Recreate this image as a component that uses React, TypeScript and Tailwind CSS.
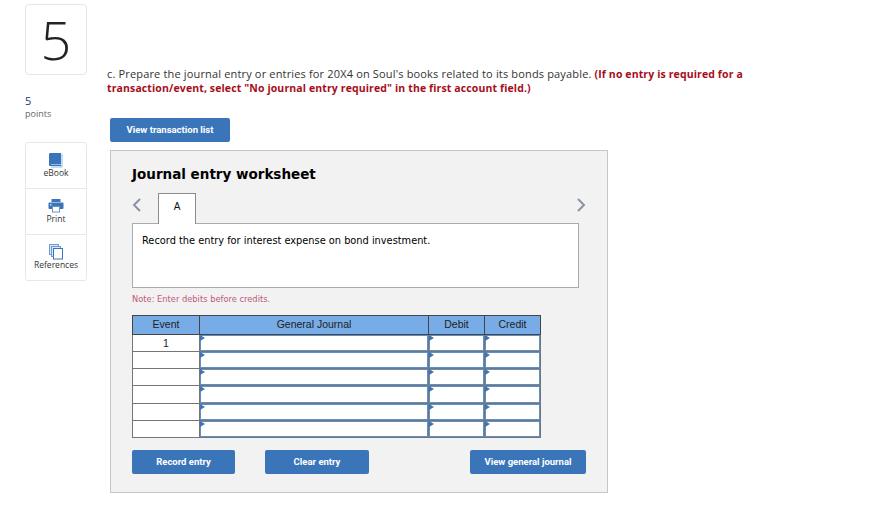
const rows = ["1", "", "", "", "", ""];

function BookIcon() {
  return (
    <svg width="16" height="16" viewBox="0 0 16 16">
      <path d="M14 2v13H3" fill="none" stroke="#8db8ea" strokeWidth="1" />
      <path d="M1 2.5C1 1.5 1.6 1 2.5 1H13v11.5H3v.5h10v1H2.5C1.6 14 1 13.5 1 12.5z" fill="#3a75b9" />
    </svg>
  );
}

function PrintIcon() {
  return (
    <svg width="16" height="16" viewBox="0 0 16 16">
      <rect x="3.5" y="1" width="9" height="3" fill="#3a75b9" />
      <rect x="0.5" y="4.5" width="15" height="6.5" rx="1" fill="#3a75b9" />
      <rect x="2" y="6" width="1.5" height="1.5" fill="#cfe0f5" />
      <rect x="4.5" y="8.5" width="7" height="5.5" fill="#fff" stroke="#6e94c4" strokeWidth="1" />
    </svg>
  );
}

function RefIcon() {
  return (
    <svg width="15" height="16" viewBox="0 0 15 16">
      <rect x="0.5" y="0.5" width="9" height="10" fill="#d6e6f8" stroke="#6f9bd0" />
      <rect x="2.5" y="2.5" width="9" height="10" fill="#d6e6f8" stroke="#6f9bd0" />
      <rect x="4.5" y="4.5" width="9" height="10.5" fill="#fff" stroke="#3a75b9" />
    </svg>
  );
}

function NavItem({ icon, label, last }: { icon: React.ReactNode; label: string; last?: boolean }) {
  return (
    <div className={`flex flex-col items-center pt-[9px] ${last ? "h-[45px]" : "h-[46px] border-b border-[#e8e8e8]"}`}>
      <div className="flex h-4 items-center justify-center">{icon}</div>
      <span className="text-[8.5px] leading-[10px] text-[#333]">{label}</span>
    </div>
  );
}

function BlueButton({ label, className }: { label: string; className: string }) {
  return (
    <button className={`h-6 rounded-[2px] bg-[#3a75b9] text-[9.5px] font-bold text-white font-['Roboto',sans-serif] ${className}`}>
      {label}
    </button>
  );
}

function Cell() {
  return (
    <td className="relative border border-[#757575] p-0">
      <div className="absolute inset-0 border-[1.5px] border-[#5f8fc9] bg-white" />
      <div className="absolute left-0 top-0 h-0 w-0 border-y-[3px] border-l-[5px] border-y-transparent border-l-[#3a75b9]" />
    </td>
  );
}

export default function App() {
  return (
    <div className="flex h-[511px] w-[880px] overflow-hidden bg-white font-['Open_Sans',sans-serif]">
      <div className="ml-[25px] w-[62px] pt-1">
        <div className="flex h-[71px] items-center justify-center rounded-[4px] border border-[#e6e6e6] text-[54px] font-light text-[#222]">
          5
        </div>
        <div className="mt-[19px] text-[11px] leading-[13px] text-[#1f3a73]">5</div>
        <div className="text-[9px] leading-[13px] text-[#666]">points</div>
        <div className="mt-[22px] overflow-hidden rounded-[3px] border border-[#e8e8e8]">
          <NavItem icon={<BookIcon />} label="eBook" />
          <NavItem icon={<PrintIcon />} label="Print" />
          <NavItem icon={<RefIcon />} label="References" last />
        </div>
      </div>

      <div className="ml-[20px] w-[660px] pt-[67px]">
        <p className="w-[650px] text-[11px] leading-[14px] tracking-[0.16px] text-[#333]">
          c. Prepare the journal entry or entries for 20X4 on Soul's books related to its bonds payable.{" "}
          <strong className="text-[10.5px] font-bold tracking-[0.12px] text-[#a50d1b]">
            (If no entry is required for a transaction/event, select "No journal entry required" in the first account field.)
          </strong>
        </p>

        <div className="ml-[3px] mt-[23px]">
          <BlueButton label="View transaction list" className="block w-[120px]" />

          <div className="mt-2 h-[343px] w-[498px] border border-[#c6c6c6] bg-[#f2f2f2] pl-[21px] pt-[14px] font-['DejaVu_Sans',sans-serif]">
            <h2 className="text-[13.5px] font-bold leading-[18px] text-black">Journal entry worksheet</h2>

            <div className="mt-[10px] flex h-[31px] w-[454px] items-start">
              <svg className="mt-[5px]" width="10" height="14" viewBox="0 0 10 14">
                <path d="M8 1 2 7l6 6" fill="none" stroke="#8a93a3" strokeWidth="2" />
              </svg>
              <div className="relative z-10 ml-[16px] flex h-[31px] w-[38px] items-center justify-center border border-b-0 border-[#8c8c8c] bg-white pb-[5px] text-[10px] text-[#111] font-['Liberation_Sans',sans-serif]">
                A
              </div>
              <svg className="ml-auto mt-[5px]" width="10" height="14" viewBox="0 0 10 14">
                <path d="M2 1l6 6-6 6" fill="none" stroke="#8a93a3" strokeWidth="2" />
              </svg>
            </div>

            <div className="-mt-px h-[65px] w-[447px] border border-[#aaaaaa] bg-white px-[9px] pt-[10px] text-[9.8px] leading-[13px] text-black">
              Record the entry for interest expense on bond investment.
            </div>

            <p className="mt-[6px] text-[8.3px] leading-[11px] text-[#c0587a]">Note: Enter debits before credits.</p>

            <table className="mt-[10px] w-[408px] table-fixed border-collapse font-['Liberation_Sans',sans-serif] text-[10.5px] text-[#222]">
              <thead>
                <tr className="h-[19px] bg-[#77ace6]">
                  <th className="w-[67px] border border-[#444] font-normal">Event</th>
                  <th className="w-[229px] border border-[#444] font-normal">General Journal</th>
                  <th className="w-[56px] border border-[#444] font-normal">Debit</th>
                  <th className="w-[56px] border border-[#444] font-normal">Credit</th>
                </tr>
              </thead>
              <tbody>
                {rows.map((event, i) => (
                  <tr key={i} className={i === 3 ? "h-[18px]" : "h-[17px]"}>
                    <td className="border border-[#757575] bg-white p-0 text-center leading-none">{event}</td>
                    <Cell />
                    <Cell />
                    <Cell />
                  </tr>
                ))}
              </tbody>
            </table>

            <div className="mt-3 flex w-[454px]">
              <BlueButton label="Record entry" className="w-[103px]" />
              <BlueButton label="Clear entry" className="ml-[30px] w-[104px]" />
              <BlueButton label="View general journal" className="ml-auto w-[116px]" />
            </div>
          </div>
        </div>
      </div>
    </div>
  );
}
